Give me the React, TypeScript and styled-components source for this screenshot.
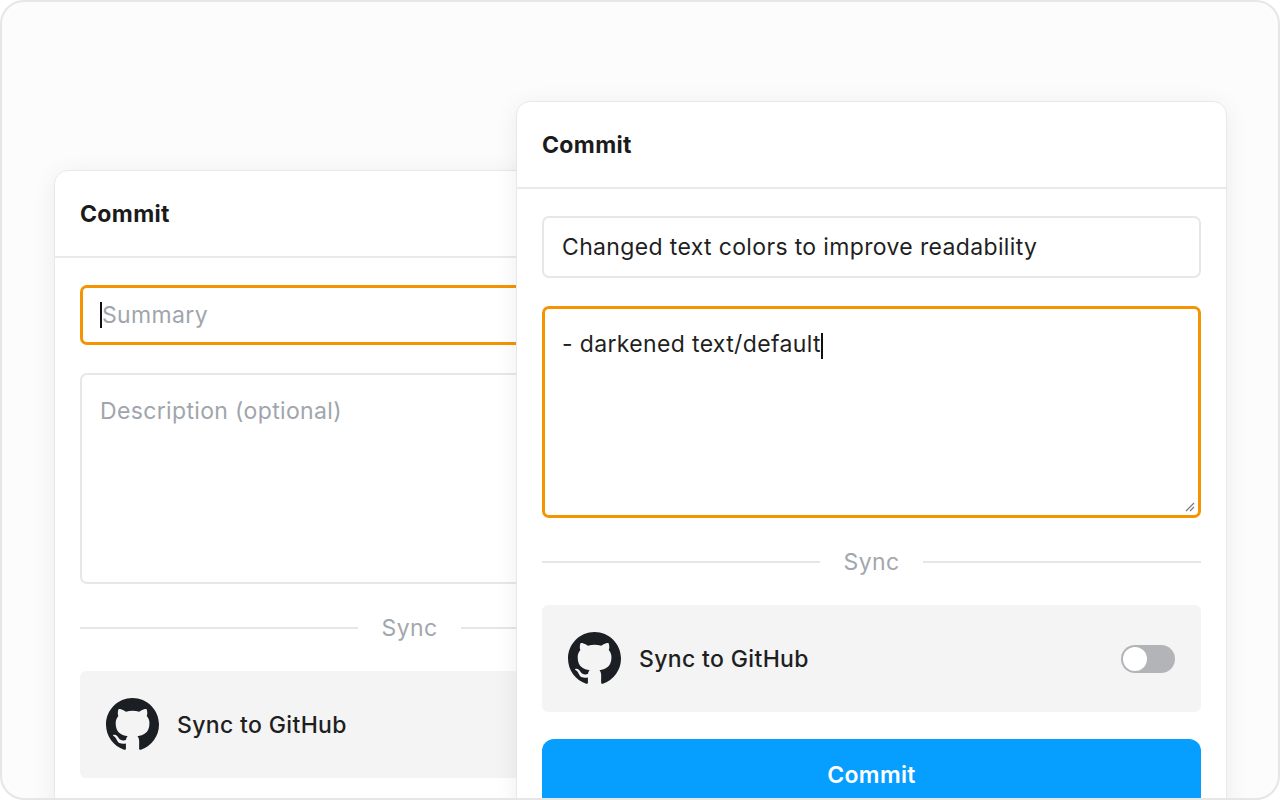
import React from "react";
import styled, { createGlobalStyle } from "styled-components";

const G = createGlobalStyle`
  html,body{margin:0;padding:0;background:#fff;}
  body{font-family:Inter,"Noto Sans",sans-serif;letter-spacing:0.35px;}
  *{box-sizing:border-box;}
`;

const Frame = styled.div`
  position: relative;
  width: 1280px; height: 800px;
  border: 2px solid #e6e6e6;
  border-radius: 24px;
  background: #fcfcfc;
  overflow: hidden;
`;

const Card = styled.div<{ $x: number; $y: number; $z: number }>`
  position: absolute;
  left: ${p => p.$x}px; top: ${p => p.$y}px; z-index: ${p => p.$z};
  width: 711px; height: 760px;
  background: #fff;
  border: 1px solid #e8e8e8;
  border-radius: 14px;
  box-shadow: 0 4px 24px rgba(0,0,0,0.07);
  display: flex; flex-direction: column;
`;

const Header = styled.div`
  height: 87px;
  padding: 0 25px;
  display: flex; align-items: center;
  font-size: 23px; font-weight: 700; color: #1b1b1b;
  border-bottom: 2px solid #e8eaed;
`;

const Body = styled.div`
  padding: 27px 25px 0;
  display: flex; flex-direction: column;
`;

const Field = styled.div<{ $focus?: boolean; $h: number; $top?: boolean }>`
  height: ${p => p.$h}px;
  border: ${p => p.$focus ? "3px solid #f59300" : "2px solid #e5e7eb"};
  border-radius: 7px;
  padding: ${p => p.$top ? (p.$focus ? "21px 17px" : "22px 18px") : (p.$focus ? "0 17px" : "0 18px")};
  display: flex; align-items: ${p => p.$top ? "flex-start" : "center"};
  font-size: 23px; color: #1f1f1f;
  position: relative;
  margin-bottom: 28px;
`;

const Placeholder = styled.span`color:#a0a5ad;`;
const Caret = styled.span`display:inline-block;width:2px;height:26px;background:#111;vertical-align:middle;`;

const Grip = styled.svg`position:absolute;right:3px;bottom:3px;`;

const Divider = styled.div`
  display: flex; align-items: center; gap: 24px;
  margin: 2px 0 29px;
  font-size: 23px; color: #a3a7ad;
  &::before,&::after{content:"";flex:1;height:2px;background:#e6e6e6;}
`;

const SyncRow = styled.div`
  height: 107px;
  background: #f4f4f5;
  border-radius: 6px;
  display: flex; align-items: center;
  padding: 0 26px;
  gap: 18px;
  font-size: 23px; color: #1f1f1f; font-weight: 500;
`;

const Toggle = styled.div`
  margin-left: auto;
  width: 54px; height: 28px; border-radius: 14px;
  background: #b3b4b8; position: relative;
  &::after{content:"";position:absolute;left:2px;top:2px;width:24px;height:24px;border-radius:50%;background:#fff;}
`;

const Button = styled.div`
  margin-top: 27px;
  height: 72px;
  background: #069eff;
  border-radius: 12px;
  color: #fff; font-size: 23px; font-weight: 600;
  display: flex; align-items: center; justify-content: center;
`;

const GitHub = () => (
  <svg width="53" height="53" viewBox="0 0 16 16" fill="#1b1f23">
    <path d="M8 0C3.58 0 0 3.58 0 8c0 3.54 2.290 6.53 5.47 7.59.4.07.55-.17.55-.38 0-.19-.01-.82-.01-1.49-2.01.37-2.53-.49-2.69-.94-.09-.23-.48-.94-.82-1.13-.28-.15-.68-.52-.01-.53.63-.01 1.08.58 1.23.82.72 1.21 1.87.87 2.33.66.07-.52.28-.87.51-1.07-1.78-.2-3.640-.89-3.640-3.95 0-.87.31-1.59.82-2.15-.08-.2-.36-1.02.08-2.12 0 0 .67-.21 2.2.82.64-.18 1.32-.27 2-.27.68 0 1.36.09 2 .27 1.53-1.04 2.2-.82 2.2-.82.44 1.1.16 1.92.08 2.12.51.56.82 1.27.82 2.15 0 3.07-1.87 3.75-3.65 3.95.29.25.54.73.54 1.48 0 1.07-.01 1.93-.01 2.2 0 .21.15.46.55.38A8.013 8.013 0 0016 8c0-4.42-3.58-8-8-8z" />
  </svg>
);

export default function App() {
  return (
    <>
      <G />
      <Frame>
        <Card $x={52} $y={168} $z={1}>
          <Header>Commit</Header>
          <Body>
            <Field $focus $h={60}><Caret /><Placeholder>Summary</Placeholder></Field>
            <Field $top $h={211}><Placeholder>Description (optional)</Placeholder></Field>
            <Divider>Sync</Divider>
            <SyncRow><GitHub />Sync to GitHub<Toggle /></SyncRow>
          </Body>
        </Card>
        <Card $x={514} $y={99} $z={2}>
          <Header>Commit</Header>
          <Body>
            <Field $h={62}>Changed text colors to improve readability</Field>
            <Field $focus $top $h={212}>
              <span>- darkened text/default<Caret /></span>
              <Grip width="14" height="14" viewBox="0 0 14 14">
                <path d="M13 5L5 13M13 9L9 13" stroke="#777" strokeWidth="1.2" />
              </Grip>
            </Field>
            <Divider>Sync</Divider>
            <SyncRow><GitHub />Sync to GitHub<Toggle /></SyncRow>
            <Button>Commit</Button>
          </Body>
        </Card>
      </Frame>
    </>
  );
}
